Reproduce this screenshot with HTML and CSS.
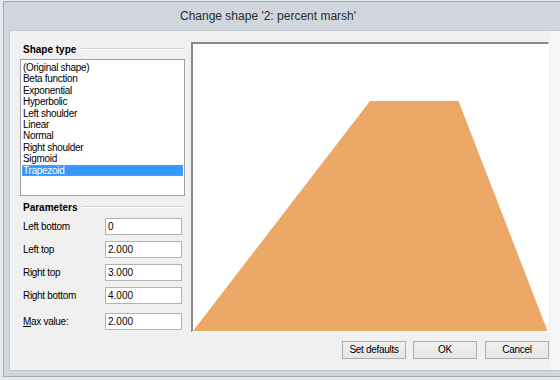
FILE: index.html
```html
<!DOCTYPE html>
<html>
<head>
<meta charset="utf-8">
<link rel="stylesheet" href="styles.css">
</head>
<body>
<div class="window">
  <div class="titlebar">Change shape '2: percent marsh'</div>
  <div class="frame">
    <div class="client">
      <div class="content">
        <div class="main">
          <div class="left">
            <div class="group-head"><span>Shape type</span><i class="rule"></i></div>
            <div class="listbox">
              <div class="item">(Original shape)</div>
              <div class="item">Beta function</div>
              <div class="item">Exponential</div>
              <div class="item">Hyperbolic</div>
              <div class="item">Left shoulder</div>
              <div class="item">Linear</div>
              <div class="item">Normal</div>
              <div class="item">Right shoulder</div>
              <div class="item">Sigmoid</div>
              <div class="item selected">Trapezoid</div>
            </div>
            <div class="group-head params-head"><span>Parameters</span><i class="rule"></i></div>
            <div class="params">
              <div class="row"><label>Left bottom</label><div class="input">0</div></div>
              <div class="row"><label>Left top</label><div class="input">2.000</div></div>
              <div class="row"><label>Right top</label><div class="input">3.000</div></div>
              <div class="row"><label>Right bottom</label><div class="input">4.000</div></div>
              <div class="row maxrow"><label><u>M</u>ax value:</label><div class="input">2.000</div></div>
            </div>
          </div>
          <div class="chart">
            <svg width="355" height="287" viewBox="0 0 355 287">
              <polygon points="0,287 177,57 265.5,57 354.5,287" fill="#eca867"/>
            </svg>
          </div>
        </div>
        <div class="buttons">
          <div class="btn">Set defaults</div>
          <div class="btn">OK</div>
          <div class="btn cancel">Cancel</div>
        </div>
      </div>
      <div class="strip"></div>
    </div>
  </div>
</div>
</body>
</html>
```

FILE: styles.css
```css
html, body {
  margin: 0;
  padding: 0;
}
body {
  width: 560px;
  height: 380px;
  overflow: hidden;
  background: #e6e9ec;
  padding: 1px 0 0 3px;
  box-sizing: border-box;
  font-family: "Liberation Sans", Arial, sans-serif;
  font-size: 10px;
  letter-spacing: -0.3px;
  color: #000;
}
.window {
  width: 557px;
  height: 376px;
  box-sizing: border-box;
  border: 1px solid #a3abb4;
  border-right: none;
  background: #cfd6de;
  display: flex;
  flex-direction: column;
  overflow: hidden;
}
.titlebar {
  height: 28px;
  line-height: 28px;
  padding-left: 176px;
  font-size: 12px;
  letter-spacing: 0;
  color: #2b2b2b;
  white-space: nowrap;
}
.frame {
  padding-left: 5px;
  height: 341px;
}
.client {
  height: 341px;
  box-sizing: border-box;
  border: 1px solid #c3c8cd;
  border-right: none;
  background: #f0f0f0;
  display: flex;
}
.content {
  width: 540px;
  flex: none;
  padding: 11px 1px 0 10px;
  box-sizing: border-box;
  display: flex;
  flex-direction: column;
}
.strip {
  flex: 1;
  background: #f6f6f6;
}
.main {
  display: flex;
  gap: 6px;
  height: 290px;
}
.left {
  width: 166px;
  display: flex;
  flex-direction: column;
}
.group-head {
  height: 12px;
  margin-top: 1px;
  display: flex;
  align-items: center;
  padding-left: 3px;
  font-weight: bold;
  letter-spacing: 0;
}
.group-head .rule {
  flex: 1;
  margin-left: 5px;
  margin-right: 1px;
  height: 0;
  border-top: 1px solid #d3d3d3;
  border-bottom: 1px solid #ffffff;
}
.listbox {
  margin-top: 4px;
  height: 137px;
  box-sizing: border-box;
  border: 1px solid #a0a0a0;
  background: #fff;
  padding-top: 2px;
}
.item {
  height: 11.4px;
  line-height: 11.4px;
  margin: 0 1px;
  padding-left: 1px;
  white-space: nowrap;
}
.item.selected {
  background: #3399ff;
  color: #fff;
  outline: 1px dotted #c98a4e;
  outline-offset: -1px;
}
.params-head {
  margin-top: 5px;
}
.params {
  margin-top: 5px;
  display: flex;
  flex-direction: column;
  gap: 6px;
}
.row {
  display: flex;
  align-items: center;
  height: 17px;
}
.row.maxrow {
  margin-top: 3px;
}
.row label {
  width: 85px;
  padding-left: 3px;
  box-sizing: border-box;
}
.input {
  width: 77px;
  height: 17px;
  box-sizing: border-box;
  border: 1px solid #b3b3b3;
  background: #fff;
  padding-left: 2px;
  line-height: 15px;
  letter-spacing: 0;
}
.chart {
  width: 358px;
  height: 290px;
  box-sizing: border-box;
  border-top: 2px solid #888888;
  border-left: 2px solid #888888;
  border-right: 1px solid #ffffff;
  border-bottom: 1px solid #ffffff;
  background: #fff;
}
.chart svg {
  display: block;
}
.buttons {
  margin-top: 9px;
  display: flex;
  justify-content: flex-end;
  gap: 7px;
}
.btn {
  width: 64px;
  height: 18px;
  box-sizing: border-box;
  border: 1px solid #acacac;
  background: linear-gradient(#f0f0f0, #e5e5e5);
  text-align: center;
  line-height: 16px;
}
.btn.cancel {
  margin-left: 1px;
}
```
